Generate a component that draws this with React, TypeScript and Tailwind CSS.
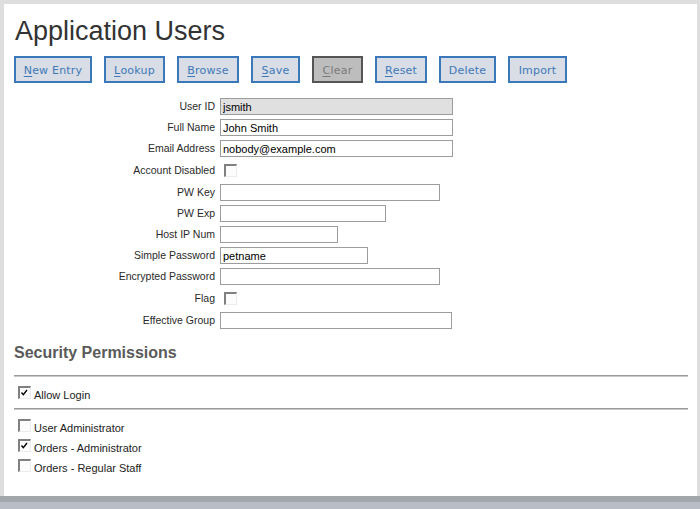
import React from "react";

type Field =
  | { label: string; kind: "text"; width: number; value?: string; readOnly?: boolean }
  | { label: string; kind: "check"; checked?: boolean };

const fields: Field[] = [
  { label: "User ID", kind: "text", width: 233, value: "jsmith", readOnly: true },
  { label: "Full Name", kind: "text", width: 233, value: "John Smith" },
  { label: "Email Address", kind: "text", width: 233, value: "nobody@example.com" },
  { label: "Account Disabled", kind: "check" },
  { label: "PW Key", kind: "text", width: 220 },
  { label: "PW Exp", kind: "text", width: 166 },
  { label: "Host IP Num", kind: "text", width: 118 },
  { label: "Simple Password", kind: "text", width: 148, value: "petname" },
  { label: "Encrypted Password", kind: "text", width: 220 },
  { label: "Flag", kind: "check" },
  { label: "Effective Group", kind: "text", width: 232 },
];

const buttons = [
  { key: "N", rest: "ew Entry", w: "w-[78px]" },
  { key: "L", rest: "ookup", w: "w-[61px]" },
  { key: "B", rest: "rowse", w: "w-[62px]" },
  { key: "S", rest: "ave", w: "w-[49px]" },
  { key: "C", rest: "lear", w: "w-[51px]", disabled: true },
  { key: "R", rest: "eset", w: "w-[52px]" },
  { key: "", rest: "Delete", w: "w-[57px]" },
  { key: "", rest: "Import", w: "w-[59px]" },
];

const permissions = [
  { label: "User Administrator", checked: false },
  { label: "Orders - Administrator", checked: true },
  { label: "Orders - Regular Staff", checked: false },
];

function CheckBox({ checked = false }: { checked?: boolean }) {
  return (
    <span className="relative block h-[13px] w-[13px] shrink-0 border-t-2 border-l-2 border-r border-b border-t-[#808080] border-l-[#808080] border-r-[#ececec] border-b-[#ececec] bg-[#fcfcfc]">
      {checked && (
        <svg className="absolute left-0 top-0" width="10" height="10" viewBox="0 0 10 10">
          <path d="M1.5 4.5 L3.3 6.6 L7 2" fill="none" stroke="#000" strokeWidth="1.4" />
        </svg>
      )}
    </span>
  );
}

function Rule() {
  return <div className="h-[2px] border-t border-b border-t-[#9a9a9a] border-b-[#c8c8c8]" />;
}

export default function App() {
  return (
    <div className="flex h-[509px] w-[700px] flex-col bg-[#dedede] font-['Liberation_Sans',Arial,sans-serif]">
      <div className="pl-1 pr-[3px] pt-1">
        <div className="h-[492px] bg-white pl-[10px] pr-[9px]">
          {/* Title */}
          <h1 className="ml-[1px] pt-[12px] text-[27px] leading-[31px] text-[#333]">Application Users</h1>

          {/* Toolbar */}
          <div className="mt-[9px] flex gap-3">
            {buttons.map((b) => (
              <div
                key={b.rest}
                className={`flex h-[27px] ${b.w} items-center justify-center border-2 pt-[3px] font-['DejaVu_Sans',sans-serif] text-[11px] tracking-[0.2px] ${
                  b.disabled
                    ? "border-[#555] bg-[#bdbdbd] text-[#7a7a7a]"
                    : "border-[#3b78b9] bg-[#d9dde5] text-[#3d79b9]"
                }`}
              >
                {b.key && <span className="underline underline-offset-2">{b.key}</span>}
                {b.rest}
              </div>
            ))}
          </div>

          {/* Form */}
          <div className="mt-[13px] flex flex-col">
            {fields.map((f) => (
              <div
                key={f.label}
                className={`flex items-center ${f.kind === "check" ? "h-[23px]" : "h-[21px]"}`}
              >
                <label className="w-[206px] shrink-0 pr-[5px] text-right text-[10.5px] text-[#2a2a2a]">
                  {f.label}
                </label>
                {f.kind === "text" ? (
                  <input
                    defaultValue={f.value ?? ""}
                    readOnly={f.readOnly}
                    style={{ width: f.width }}
                    className={`h-[17px] border border-[#9c9c9c] px-[2px] text-[11px] text-black outline-none ${
                      f.readOnly ? "bg-[#e0e0e0]" : "bg-white"
                    }`}
                  />
                ) : (
                  <span className="ml-1">
                    <CheckBox checked={f.checked} />
                  </span>
                )}
              </div>
            ))}
          </div>

          {/* Security permissions */}
          <h2 className="mt-[12px] text-[16px] font-bold leading-[20px] text-[#5a5a5a]">Security Permissions</h2>
          <div className="mt-[12px]">
            <Rule />
          </div>
          <div className="ml-1 flex h-[31px] items-start pt-[9px]">
            <CheckBox checked />
            <span className="ml-[3px] pt-[3px] text-[11px] leading-[13px] text-[#222]">Allow Login</span>
          </div>
          <Rule />
          <div className="ml-1 mt-[9px] flex flex-col gap-[4px]">
            {permissions.map((p) => (
              <div key={p.label} className="flex items-start">
                <CheckBox checked={p.checked} />
                <span className="ml-[3px] pt-[3px] text-[11px] leading-[13px] text-[#222]">{p.label}</span>
              </div>
            ))}
          </div>
        </div>
      </div>
      <div className="h-[6px] bg-[#a3a6ab]" />
      <div className="flex-1 bg-[#b8bdc6]" />
    </div>
  );
}
